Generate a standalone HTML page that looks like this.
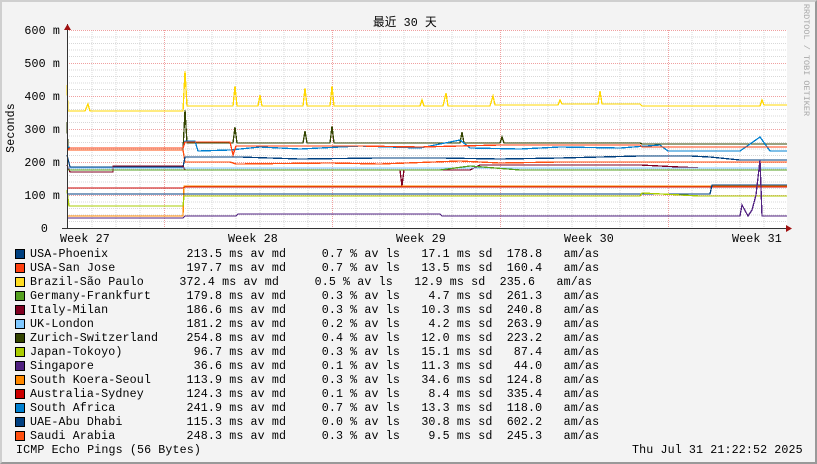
<!DOCTYPE html>
<html><head><meta charset="utf-8">
<style>
html,body{margin:0;padding:0}
body{width:817px;height:464px;overflow:hidden;background:#f3f3f3;position:relative;font-family:"Liberation Mono","DejaVu Sans Mono",monospace;}
.frame{position:absolute;left:0;top:0;border-top:2px solid #cfcfcf;border-left:2px solid #cfcfcf;border-right:2px solid #999;border-bottom:2px solid #999;box-sizing:border-box;width:817px;height:464px}
pre{position:absolute;margin:0;font-family:"Liberation Mono","DejaVu Sans Mono",monospace;font-size:11.67px;letter-spacing:0.12px;line-height:14px;color:#000}
.sw{position:absolute;left:15px;width:8px;height:8px;border:1px solid #000}
</style></head><body>
<div class="frame"></div>
<svg width="817" height="464" style="position:absolute;left:0;top:0" xmlns="http://www.w3.org/2000/svg">
<rect x="67" y="30" width="720" height="198" fill="#fff"/>
<g stroke="#d8d8d8" stroke-width="1" stroke-dasharray="1,1" shape-rendering="crispEdges">
<path d="M67 221.5H787M67 215H787M67 208.5H787M67 202H787M67 188.5H787M67 182H787M67 175.5H787M67 169H787M67 155.5H787M67 149H787M67 142.5H787M67 136H787M67 122.5H787M67 116H787M67 109.5H787M67 103H787M67 89.5H787M67 83H787M67 76.5H787M67 70H787M67 56.5H787M67 50H787M67 43.5H787M67 37H787"/>
<path d="M92 30V228M116 30V228M140 30V228M188 30V228M212 30V228M236 30V228M260 30V228M284 30V228M308 30V228M356 30V228M380 30V228M404 30V228M428 30V228M452 30V228M476 30V228M524 30V228M548 30V228M572 30V228M596 30V228M620 30V228M644 30V228M692 30V228M716 30V228M740 30V228M764 30V228"/>
</g>
<g stroke="#f0a0a0" stroke-width="1" stroke-dasharray="1,1" shape-rendering="crispEdges">
<path d="M67 195.5H787M67 162.5H787M67 129.5H787M67 96.5H787M67 63.5H787M67 30.5H787"/>
<path d="M164.5 30V228M332.5 30V228M500.5 30V228M668.5 30V228"/>
</g>
<g fill="none" stroke-width="1.3" shape-rendering="crispEdges">
<polyline stroke="#ffd700" points="67,85 68,111 85,111 88,104 90,111 183,111 185,71 187,106 233,106 235,86 237,106 258,106 260,95 262,106 303,106 305,88 307,106 330,106 332,86 334,106 420,106 422,100 424,106 443,106 446,93 448,106 490,106 493,96 495,105 558,105 560,100 562,104 598,104 600,91 602,104 640,104 642,106 760,106 762,100 764,105 787,105"/>
<polyline stroke="#334400" points="67,122 68,150 183,150 185,110 187,143 233,143 235,127 237,143 303,143 305,131 307,143 330,143 332,126 334,143 460,143 462,132 464,143 500,143 502,137 504,143 640,143 642,144 787,144"/>
<polyline stroke="#0080d0" points="67,146 70,148 183,148 185,141 195,141 198,151 230,150 260,147 300,149 360,146 420,148 460,140 470,148 520,149 560,147 620,148 660,145 668,151 740,151 760,137 770,151 787,151"/>
<polyline stroke="#ff4010" points="67,150 70,148 183,148 185,142 230,142 233,155 236,146 360,146 420,147 500,145 640,145 642,147 787,147"/>
<polyline stroke="#ff5010" points="67,150 183,150 185,162 230,162 236,164 330,163 380,164 460,161 500,163 560,162 640,162 700,162 787,162"/>
<polyline stroke="#004080" points="67,155 70,167 183,167 185,157 240,157 300,159 380,158 440,158 500,159 560,158 640,156 690,156 710,157 740,160 787,160"/>
<polyline stroke="#800020" points="67,165 70,172 113,172 113,166 183,166 185,170 400,170 402,186 404,170 470,170 480,165 640,165 700,168 787,168"/>
<polyline stroke="#80c8ff" points="67,168 787,168"/>
<polyline stroke="#55a020" points="67,170 183,170 440,170 470,166 520,170 640,170 787,170"/>
<polyline stroke="#cc0000" points="67,188 183,188 185,187 787,187"/>
<polyline stroke="#ff8800" points="67,216 183,216 184,186 787,186"/>
<polyline stroke="#003f80" points="67,194 710,194 712,185 787,185"/>
<polyline stroke="#aacc00" points="67,190 69,206 183,206 184,196 560,196 640,196 642,193 700,196 787,196"/>
<polyline stroke="#502080" points="67,218 183,218 185,216 236,216 238,214 440,214 442,216 700,216 740,216 742,205 748,216 752,210 756,195 760,160 762,216 787,216"/>
</g>
<path d="M67.5 24V228M62 228.5H791" stroke="#333" stroke-width="1" shape-rendering="crispEdges"/>
<path d="M64 30L67.5 24L71 30Z M786 225L792 228.5L786 232Z" fill="#a01010"/>
<g font-family="Liberation Mono, monospace" font-size="11.67" letter-spacing="0.12" fill="#000" text-anchor="end">
<text x="60" y="34">600 m</text><text x="60" y="67">500 m</text><text x="60" y="100">400 m</text><text x="60" y="133">300 m</text><text x="60" y="166">200 m</text><text x="60" y="199">100 m</text><text x="48" y="232">0</text>
</g>
<g font-family="Liberation Mono, monospace" font-size="11.67" letter-spacing="0.12" fill="#000">
<text x="60" y="242">Week 27</text><text x="228" y="242">Week 28</text><text x="396" y="242">Week 29</text><text x="564" y="242">Week 30</text><text x="732" y="242">Week 31</text>
<text x="373" y="26" font-family="Liberation Mono, Noto Sans CJK SC, monospace">最近 30 天</text>
<text transform="translate(14,128) rotate(-90)" text-anchor="middle">Seconds</text>
</g>
<text transform="translate(804,60) rotate(90)" text-anchor="middle" font-family="Liberation Mono, monospace" font-size="8.5" fill="#aaa">RRDTOOL / TOBI OETIKER</text>
</svg>
<div class="sw" style="top:249px;background:#004080"></div>
<div class="sw" style="top:263px;background:#ff4010"></div>
<div class="sw" style="top:277px;background:#ffdd22"></div>
<div class="sw" style="top:291px;background:#55a020"></div>
<div class="sw" style="top:305px;background:#800020"></div>
<div class="sw" style="top:319px;background:#80c8ff"></div>
<div class="sw" style="top:333px;background:#334400"></div>
<div class="sw" style="top:347px;background:#aacc00"></div>
<div class="sw" style="top:361px;background:#502080"></div>
<div class="sw" style="top:375px;background:#ff8800"></div>
<div class="sw" style="top:389px;background:#cc0000"></div>
<div class="sw" style="top:403px;background:#0080d0"></div>
<div class="sw" style="top:417px;background:#003f80"></div>
<div class="sw" style="top:431px;background:#ff5010"></div>
<pre style="left:30px;top:247px">USA-Phoenix           213.5 ms av md     0.7 % av ls   17.1 ms sd  178.8   am/as
USA-San Jose          197.7 ms av md     0.7 % av ls   13.5 ms sd  160.4   am/as
Brazil-São Paulo     372.4 ms av md     0.5 % av ls   12.9 ms sd  235.6   am/as
Germany-Frankfurt     179.8 ms av md     0.3 % av ls    4.7 ms sd  261.3   am/as
Italy-Milan           186.6 ms av md     0.3 % av ls   10.3 ms sd  240.8   am/as
UK-London             181.2 ms av md     0.2 % av ls    4.2 ms sd  263.9   am/as
Zurich-Switzerland    254.8 ms av md     0.4 % av ls   12.0 ms sd  223.2   am/as
Japan-Tokoyo)          96.7 ms av md     0.3 % av ls   15.1 ms sd   87.4   am/as
Singapore              36.6 ms av md     0.1 % av ls   11.3 ms sd   44.0   am/as
South Koera-Seoul     113.9 ms av md     0.3 % av ls   34.6 ms sd  124.8   am/as
Australia-Sydney      124.3 ms av md     0.1 % av ls    8.4 ms sd  335.4   am/as
South Africa          241.9 ms av md     0.7 % av ls   13.3 ms sd  118.0   am/as
UAE-Abu Dhabi         115.3 ms av md     0.0 % av ls   30.8 ms sd  602.2   am/as
Saudi Arabia          248.3 ms av md     0.3 % av ls    9.5 ms sd  245.3   am/as</pre>
<pre style="left:16px;top:443px">ICMP Echo Pings (56 Bytes)</pre>
<pre style="left:632px;top:443px">Thu Jul 31 21:22:52 2025</pre>
</body></html>
